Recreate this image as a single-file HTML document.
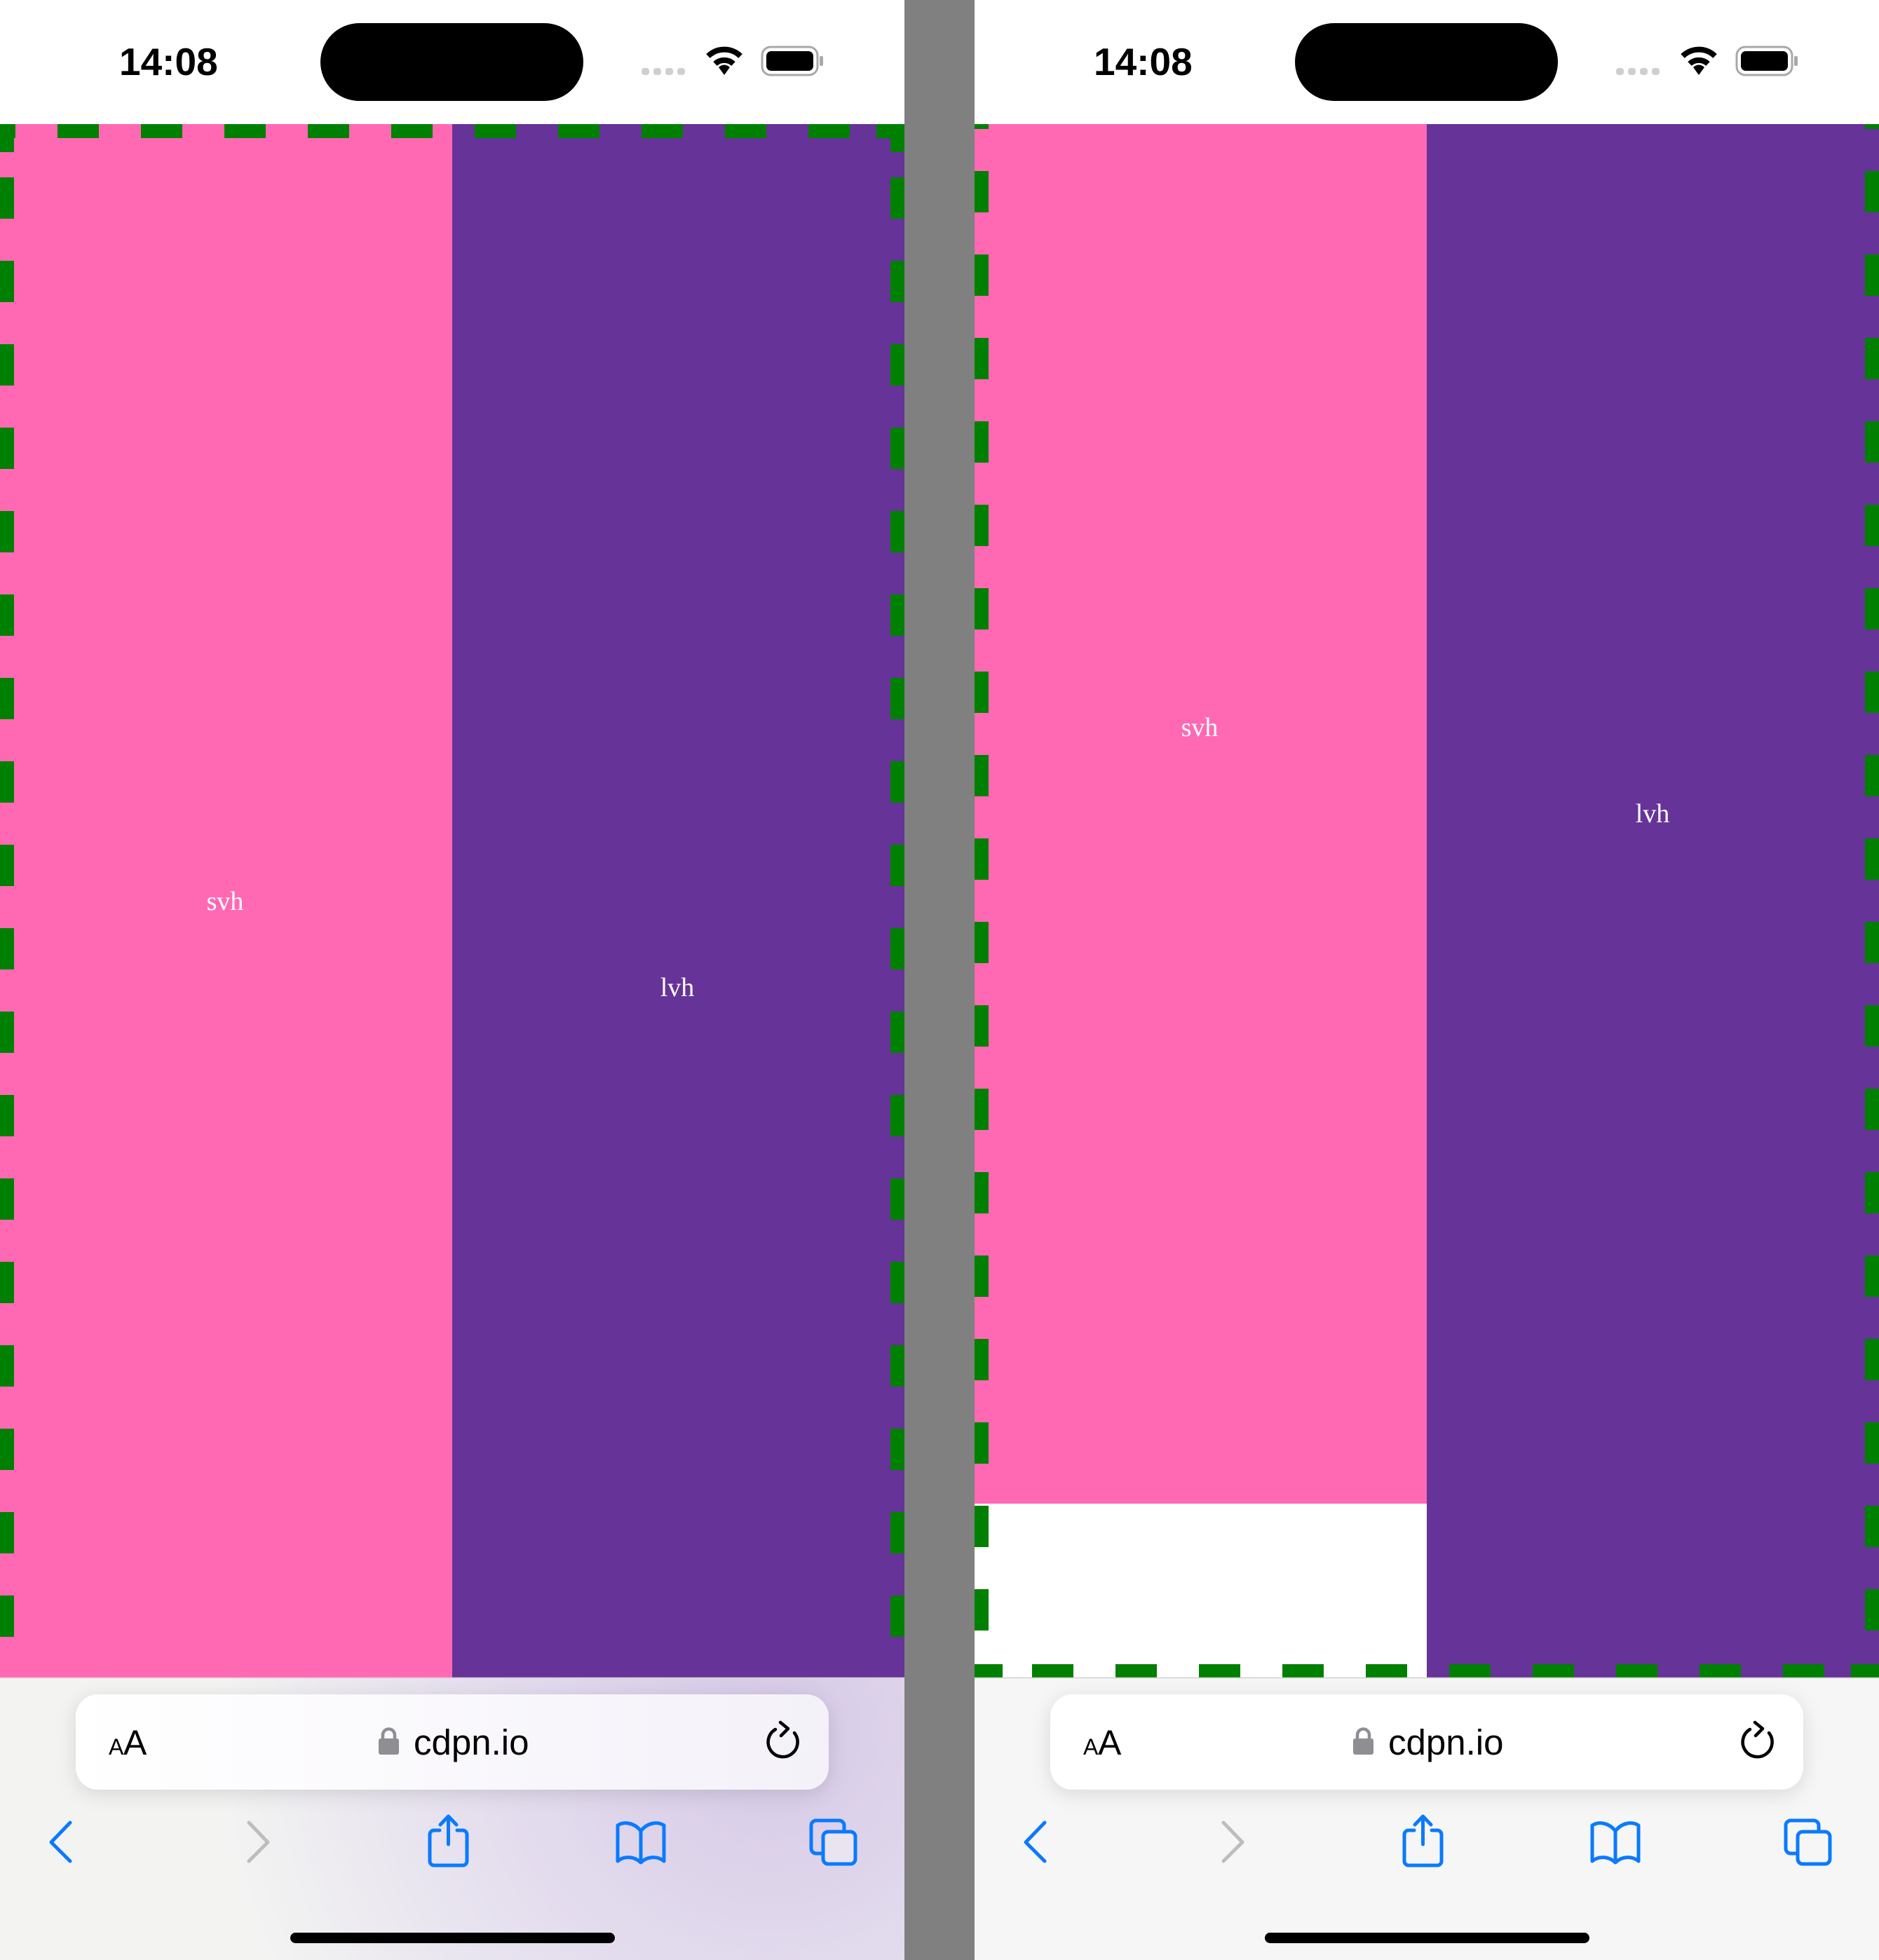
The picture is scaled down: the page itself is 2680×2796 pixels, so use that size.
<!DOCTYPE html>
<html><head><meta charset="utf-8"><style>html,body{margin:0;padding:0;background:#fff}svg{display:block}</style></head>
<body>
<svg width="2680" height="2796" viewBox="0 0 2680 2796" xmlns="http://www.w3.org/2000/svg">
<defs>
<radialGradient id="tint" cx="1100" cy="2470" r="800" gradientUnits="userSpaceOnUse">
<stop offset="0" stop-color="#d6c9e6"/><stop offset="0.5" stop-color="#e4ddee"/><stop offset="1" stop-color="#f3f4f2"/>
</radialGradient>
<linearGradient id="urlg" x1="0" x2="1"><stop offset="0" stop-color="#ffffff"/><stop offset="1" stop-color="#f4f1f9"/></linearGradient>
<filter id="sh" x="-10%" y="-40%" width="120%" height="180%"><feDropShadow dx="0" dy="6" stdDeviation="14" flood-color="#000" flood-opacity="0.12"/></filter>
<g id="status">
<rect width="1290" height="177" fill="#fff"/>
<text x="170" y="107" font-family="Liberation Sans, sans-serif" font-weight="bold" font-size="55" fill="#000">14:08</text>
<rect x="457" y="33" width="375" height="111" rx="55.5" fill="#000"/>
<rect x="915" y="97" width="11" height="10" rx="4" fill="#cfcfcf"/>
<rect x="932" y="97" width="11" height="10" rx="4" fill="#cfcfcf"/>
<rect x="949" y="97" width="11" height="10" rx="4" fill="#cfcfcf"/>
<rect x="966" y="97" width="11" height="10" rx="4" fill="#cfcfcf"/>
<path d="M1010,80 A33,33 0 0 1 1056,80" stroke="#000" stroke-width="8" fill="none"/>
<path d="M1020,91 A19,19 0 0 1 1046,91" stroke="#000" stroke-width="8" fill="none"/>
<path d="M1033,107 L1025,96 A11,11 0 0 1 1041,96 Z" fill="#000"/>
<rect x="1087" y="67" width="79" height="40" rx="12" fill="none" stroke="#a8a8a8" stroke-width="3"/>
<rect x="1093" y="73" width="67" height="28" rx="7" fill="#000"/>
<rect x="1169" y="80" width="5" height="14" rx="2" fill="#a8a8a8"/>
</g>
<g id="urlcontent">
<text x="155" y="2503" font-family="Liberation Sans, sans-serif" font-size="32" fill="#000">A</text>
<text x="176" y="2503" font-family="Liberation Sans, sans-serif" font-size="50" fill="#000">A</text>
<rect x="540" y="2480" width="29" height="23" rx="3" fill="#8e8e93"/>
<path d="M546,2482 V2475 a8.5,8.5 0 0 1 17,0 V2482" stroke="#8e8e93" stroke-width="4.5" fill="none"/>
<text x="590" y="2503" font-family="Liberation Sans, sans-serif" font-size="51" fill="#000">cdpn.io</text>
<path d="M1106,2467 A21,21 0 1 0 1133,2472" stroke="#000" stroke-width="4.5" fill="none" stroke-linecap="round"/>
<path d="M1113,2457 L1124,2466 L1114,2476" stroke="#000" stroke-width="4.5" fill="none" stroke-linecap="round" stroke-linejoin="round"/>
</g>
<g id="icons" fill="none" stroke-width="5" stroke-linecap="round" stroke-linejoin="round">
<path d="M100,2600 L73,2628 L100,2655" stroke="#0a7aff"/>
<path d="M355,2600 L382,2628 L355,2655" stroke="#bdbdbd"/>
<path d="M627,2611 H619 a6,6 0 0 0 -6,6 V2655 a6,6 0 0 0 6,6 H660 a6,6 0 0 0 6,-6 V2617 a6,6 0 0 0 -6,-6 H652" stroke="#0a7aff"/>
<path d="M639.5,2631 V2592 M628,2603 L639.5,2591 L651,2603" stroke="#0a7aff"/>
<path d="M914,2612 C905,2600 890,2598 881,2604 V2655 C890,2647 905,2648 914,2657 C923,2648 938,2647 947,2655 V2604 C938,2598 923,2600 914,2612 V2655" stroke="#0a7aff"/>
<rect x="1157" y="2597" width="47" height="47" rx="7" stroke="#0a7aff"/>
</g>
</defs>

<!-- LEFT PANEL -->
<rect x="0" y="177" width="645" height="2216" fill="#ff69b4"/>
<rect x="645" y="177" width="645" height="2216" fill="#663399"/>
<g stroke="#008000" stroke-width="20" stroke-dasharray="59 60" fill="none">
<line x1="0" y1="187" x2="1290" y2="187" stroke-dashoffset="37"/>
<line x1="10" y1="177" x2="10" y2="2393" stroke-dashoffset="43"/>
<line x1="1280" y1="177" x2="1280" y2="2393" stroke-dashoffset="43"/>
</g>
<rect x="0" y="177" width="20" height="40" fill="#008000"/>
<rect x="1270" y="177" width="20" height="40" fill="#008000"/>
<rect x="1250" y="177" width="40" height="20" fill="#008000"/>
<text x="321" y="1298" text-anchor="middle" font-family="Liberation Serif, serif" font-size="38" fill="#fff">svh</text>
<text x="966" y="1421" text-anchor="middle" font-family="Liberation Serif, serif" font-size="38" fill="#fff">lvh</text>
<use href="#status"/>
<rect x="0" y="2393" width="1290" height="403" fill="url(#tint)"/>
<line x1="0" y1="2393.5" x2="1290" y2="2393.5" stroke="#d4d0d8" stroke-width="1.5"/>
<rect x="108" y="2417" width="1074" height="136" rx="32" fill="url(#urlg)" filter="url(#sh)"/>
<use href="#urlcontent"/>
<use href="#icons"/>
<rect x="1174" y="2613" width="46" height="46" rx="7" fill="#e9e4ef" stroke="#0a7aff" stroke-width="5"/>
<rect x="414" y="2757" width="463" height="15" rx="7.5" fill="#000"/>

<!-- DIVIDER -->
<rect x="1290" y="0" width="100" height="2796" fill="#808080"/>

<!-- RIGHT PANEL -->
<rect x="1390" y="177" width="645" height="1968" fill="#ff69b4"/>
<rect x="1390" y="2145" width="645" height="248" fill="#fff"/>
<rect x="2035" y="177" width="645" height="2216" fill="#663399"/>
<g stroke="#008000" stroke-width="20" stroke-dasharray="59 60" fill="none">
<line x1="1400" y1="177" x2="1400" y2="2394" stroke-dashoffset="52"/>
<line x1="2670" y1="177" x2="2670" y2="2394" stroke-dashoffset="52"/>
<line x1="1390" y1="2384" x2="2680" y2="2384" stroke-dashoffset="37"/>
</g>
<rect x="1390" y="2374" width="40" height="20" fill="#008000"/>
<rect x="2640" y="2374" width="40" height="20" fill="#008000"/>
<text x="1711" y="1050" text-anchor="middle" font-family="Liberation Serif, serif" font-size="38" fill="#fff">svh</text>
<text x="2357" y="1173" text-anchor="middle" font-family="Liberation Serif, serif" font-size="38" fill="#fff">lvh</text>
<g transform="translate(1390,0)">
<use href="#status"/>
<rect x="0" y="2393" width="1290" height="403" fill="#f6f6f6"/>
<line x1="0" y1="2393.5" x2="1290" y2="2393.5" stroke="#d0d0d0" stroke-width="1.5"/>
<rect x="108" y="2417" width="1074" height="136" rx="32" fill="#fff" filter="url(#sh)"/>
<use href="#urlcontent"/>
<use href="#icons"/>
<rect x="1174" y="2613" width="46" height="46" rx="7" fill="#f6f6f6" stroke="#0a7aff" stroke-width="5"/>
<rect x="414" y="2757" width="463" height="15" rx="7.5" fill="#000"/>
</g>
</svg>
</body></html>
